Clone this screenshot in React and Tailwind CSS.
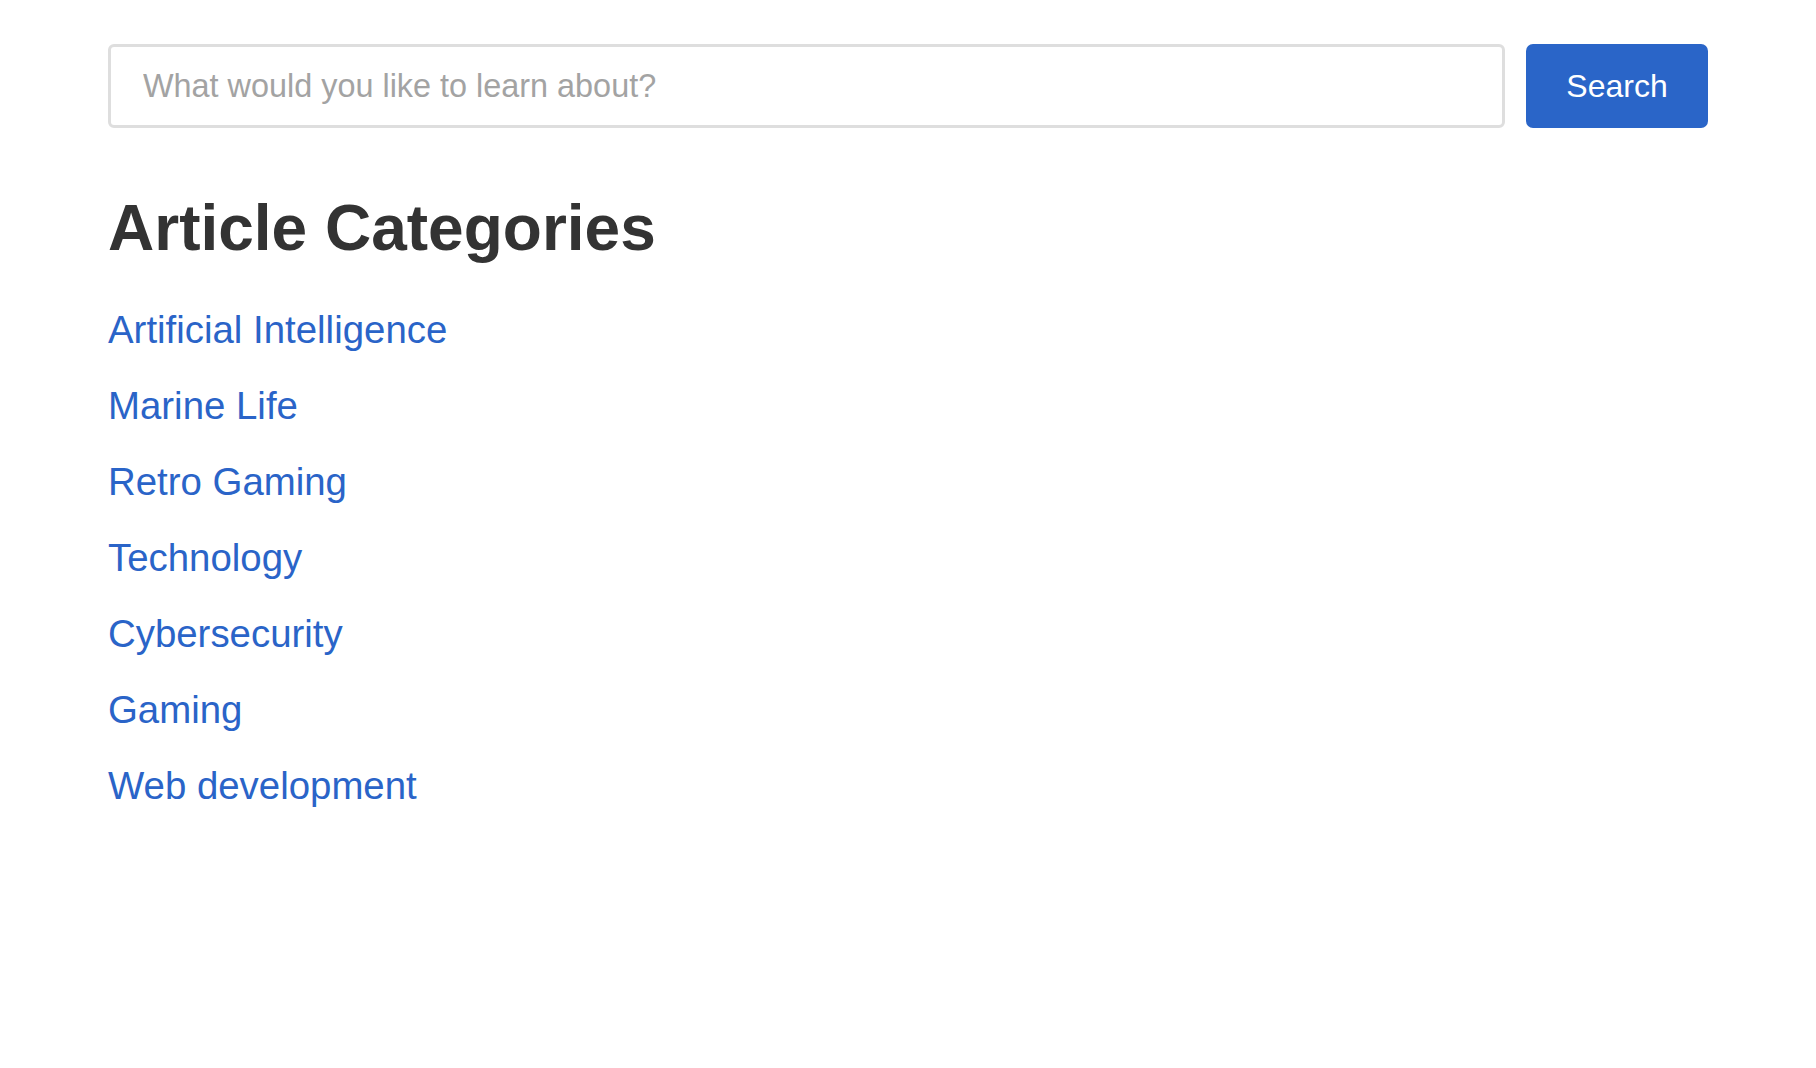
export default function App() {
  const cats = [
    "Artificial Intelligence",
    "Marine Life",
    "Retro Gaming",
    "Technology",
    "Cybersecurity",
    "Gaming",
    "Web development",
  ];
  return (
    <div
      className="min-h-screen bg-white"
      style={{ fontFamily: '"Liberation Sans", Arial, sans-serif' }}
    >
      <div className="mx-auto w-[1600px] pt-[44px]">
        <div className="flex gap-[21px]">
          <input
            type="text"
            placeholder="What would you like to learn about?"
            className="h-[84px] flex-1 rounded-[6px] border-[3px] border-[#dedede] bg-white pl-[32px] text-[32.4px] text-[#333] outline-none placeholder:text-[#a3a3a3]"
          />
          <button className="h-[84px] w-[182px] rounded-[7px] bg-[#2a65c8] text-[32px] text-white">
            Search
          </button>
        </div>
        <h1 className="mt-[62px] text-[64px] font-bold leading-[77px] text-[#333]">
          Article Categories
        </h1>
        <ul className="mt-[25px] flex flex-col">
          {cats.map((c) => (
            <li key={c} className="text-[38.4px] leading-[76px]">
              <a href="#" className="text-[#2a64c8]">
                {c}
              </a>
            </li>
          ))}
        </ul>
      </div>
    </div>
  );
}
